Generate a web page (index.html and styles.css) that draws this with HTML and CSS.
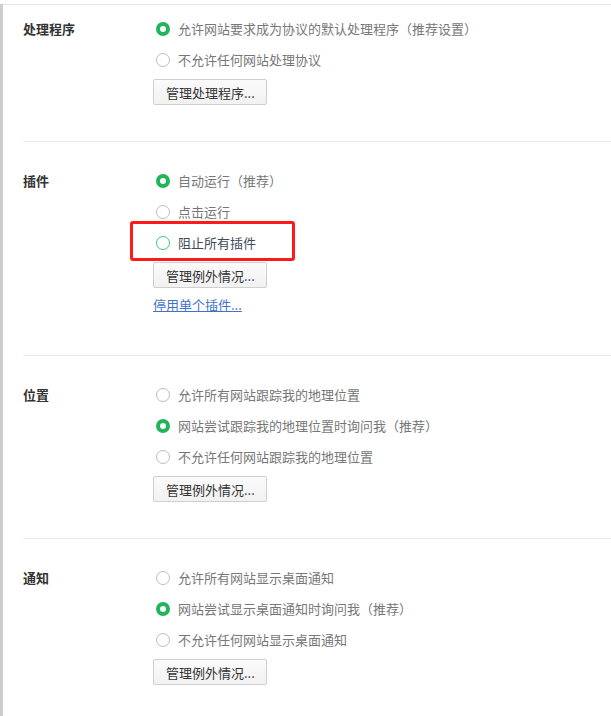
FILE: index.html
```html
<!DOCTYPE html>
<html lang="zh-CN">
<head>
    <meta charset="UTF-8">
    <title>内容设置</title>
    <link rel="stylesheet" href="styles.css">
</head>
<body>
    <div class="page">
        <div class="top-rule"></div>

        <!-- 处理程序 -->
        <section class="group first">
            <div class="group-label">处理程序</div>
            <div class="group-body">
                <label class="radio-row"><span class="radio checked"></span>允许网站要求成为协议的默认处理程序（推荐设置）</label>
                <label class="radio-row"><span class="radio"></span>不允许任何网站处理协议</label>
                <button class="btn">管理处理程序...</button>
            </div>
        </section>

        <!-- 插件 -->
        <section class="group">
            <div class="group-label">插件</div>
            <div class="group-body">
                <label class="radio-row"><span class="radio checked"></span>自动运行（推荐）</label>
                <label class="radio-row"><span class="radio"></span>点击运行</label>
                <label class="radio-row hover"><span class="radio"></span>阻止所有插件<span class="mark-box"></span></label>
                <button class="btn">管理例外情况...</button>
                <a href="#" class="link">停用单个插件...</a>
            </div>
        </section>

        <!-- 位置 -->
        <section class="group">
            <div class="group-label">位置</div>
            <div class="group-body">
                <label class="radio-row"><span class="radio"></span>允许所有网站跟踪我的地理位置</label>
                <label class="radio-row"><span class="radio checked"></span>网站尝试跟踪我的地理位置时询问我（推荐）</label>
                <label class="radio-row"><span class="radio"></span>不允许任何网站跟踪我的地理位置</label>
                <button class="btn">管理例外情况...</button>
            </div>
        </section>

        <!-- 通知 -->
        <section class="group">
            <div class="group-label">通知</div>
            <div class="group-body">
                <label class="radio-row"><span class="radio"></span>允许所有网站显示桌面通知</label>
                <label class="radio-row"><span class="radio checked"></span>网站尝试显示桌面通知时询问我（推荐）</label>
                <label class="radio-row"><span class="radio"></span>不允许任何网站显示桌面通知</label>
                <button class="btn">管理例外情况...</button>
            </div>
        </section>
    </div>
</body>
</html>
```

FILE: styles.css
```css
* {
    margin: 0;
    padding: 0;
    box-sizing: border-box;
}

body {
    font-family: "Noto Sans CJK SC", "Noto Sans", sans-serif;
    font-size: 13px;
    color: #333;
    background-color: #fff;
}

.page {
    min-height: 716px;
    border-left: 3px solid #cdcdcd;
}

.top-rule {
    margin-top: 4px;
    height: 1px;
    background-color: #e6e6e6;
}

.group {
    display: flex;
    margin-left: 20px;
    padding: 23px 0 36px;
    border-top: 1px solid #ececec;
}

.group.first {
    border-top: none;
    padding-top: 8px;
}

.group-label {
    width: 130px;
    flex-shrink: 0;
    line-height: 31px;
    font-weight: bold;
    color: #333;
}

.group-body {
    display: flex;
    flex-direction: column;
    align-items: flex-start;
}

.radio-row {
    position: relative;
    display: flex;
    align-items: center;
    height: 31px;
    color: #777;
    cursor: pointer;
}

.radio-row.hover {
    color: #3d4a5a;
}

.radio {
    width: 14px;
    height: 14px;
    margin: 0 8px 0 3px;
    border: 1px solid #bdbdbd;
    border-radius: 50%;
    background-color: #fff;
}

.radio.checked {
    border: 4px solid #21b45b;
    background-color: #fff;
}

.radio-row.hover .radio {
    border: 1.5px solid #2fcf6f;
}

.mark-box {
    position: absolute;
    top: -6px;
    left: -23px;
    width: 165px;
    height: 40px;
    border: 3px solid #ff1a1a;
    border-radius: 3px;
}

.btn {
    margin-top: 4px;
    height: 26px;
    padding: 0 11px 0 12px;
    font-family: inherit;
    font-size: 13px;
    color: #333;
    background: linear-gradient(#fbfbfb, #f1f1f1);
    border: 1px solid #cfcfcf;
    border-radius: 2px;
    cursor: pointer;
}

.link {
    margin: 7px 0 4px;
    line-height: 20px;
    color: #3f73c9;
    text-decoration: underline;
}
```
